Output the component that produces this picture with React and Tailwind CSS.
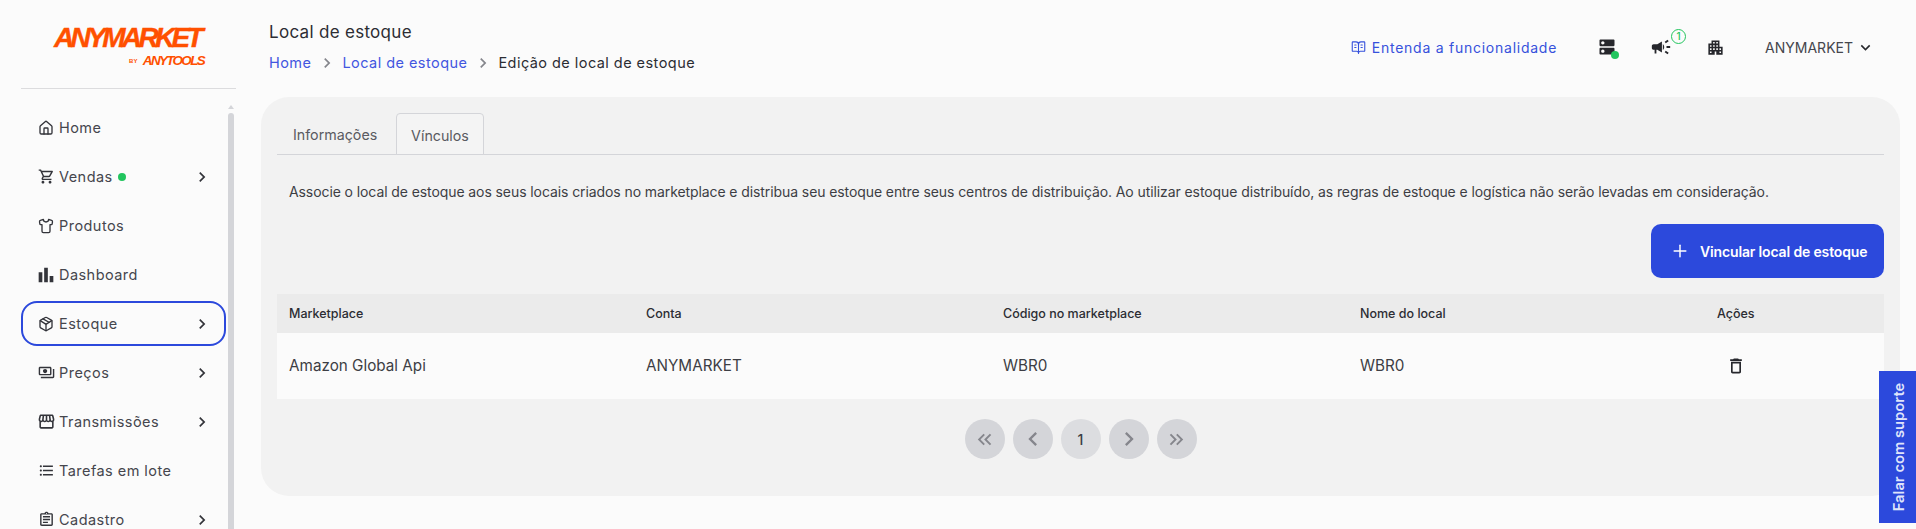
import React from 'react'
import { Plus, BookOpenText } from 'lucide-react'
import {
  MdOutlineShoppingCart, MdBarChart, MdOutlinePayments, MdOutlineStorefront, MdFormatListBulleted,
  MdOutlineAssignment, MdChevronRight, MdDns, MdCampaign, MdApartment,
  MdKeyboardArrowDown, MdOutlineDelete, MdKeyboardDoubleArrowLeft, MdKeyboardDoubleArrowRight,
  MdKeyboardArrowLeft, MdKeyboardArrowRight,
} from 'react-icons/md'
import { LuHouse, LuShirt, LuPackage } from 'react-icons/lu'

const menu = [
  { label: 'Home', icon: LuHouse, size: 16 },
  { label: 'Vendas', icon: MdOutlineShoppingCart, arrow: true, dot: true },
  { label: 'Produtos', icon: LuShirt, size: 16 },
  { label: 'Dashboard', icon: MdBarChart, size: 22 },
  { label: 'Estoque', icon: LuPackage, arrow: true, active: true, size: 16 },
  { label: 'Preços', icon: MdOutlinePayments, arrow: true },
  { label: 'Transmissões', icon: MdOutlineStorefront, arrow: true, size: 19 },
  { label: 'Tarefas em lote', icon: MdFormatListBulleted },
  { label: 'Cadastro', icon: MdOutlineAssignment, arrow: true },
]

const columns = ['Marketplace', 'Conta', 'Código no marketplace', 'Nome do local']
const row = ['Amazon Global Api', 'ANYMARKET', 'WBR0', 'WBR0']

function MenuItem({ item }) {
  const Icon = item.icon
  return (
    <div className={`h-[45px] shrink-0 flex items-center rounded-[16px] ${item.active ? 'border-2 border-[#2c49dc] px-[15px]' : 'px-[17px]'}`}>
      <span className="w-[16px] flex justify-center shrink-0">
        <Icon size={item.size || 17} className="shrink-0 text-[#33343a]" />
      </span>
      <span className="ml-[5px] text-[14.5px] tracking-[0.45px] text-[#45464d]">{item.label}</span>
      {item.dot && <span className="ml-[5px] w-[8px] h-[8px] rounded-full bg-[#22c55e]" />}
      {item.arrow && <MdChevronRight size={20} className="ml-auto mr-[-3px] text-[#33343a]" />}
    </div>
  )
}

function PageButton({ children }) {
  return (
    <button className="w-[40px] h-[40px] rounded-full bg-[#d4d5d9] flex items-center justify-center text-[#85868c]">
      {children}
    </button>
  )
}

export default function App() {
  return (
    <div className="h-screen overflow-hidden bg-[#fbfbfb] flex font-['Inter',sans-serif] text-[#2c2d33]">
      {/* Sidebar */}
      <aside className="w-[261px] shrink-0 flex flex-col">
        <div className="mx-[21px] w-[215px] h-[89px] border-b border-[#dcdcde] pl-[33px] pt-[25px] shrink-0 font-['Liberation_Sans',sans-serif] italic font-bold text-[#ff5000]">
          <div className="text-[28px] leading-[25px] tracking-[-3.65px] [-webkit-text-stroke:0.4px_#ff5000]">ANYMARKET</div>
          <div className="flex items-center justify-end w-[150px] mt-[4px] text-[13.5px] leading-[14px] tracking-[-1.7px]">
            <span className="text-[6px] not-italic mr-[5px] tracking-[0.3px]">BY</span>ANYTOOLS
          </div>
        </div>
        <div className="flex flex-1 min-h-0 pl-[21px] pt-[16px]">
          <nav className="w-[205px] flex flex-col gap-[4px]">
            {menu.map(item => <MenuItem key={item.label} item={item} />)}
          </nav>
          <div className="ml-[2px] w-[6px] flex flex-col items-center">
            <span className="w-0 h-0 border-x-[3px] border-x-transparent border-b-[4px] border-b-[#d4d5d9]" />
            <span className="mt-[4px] w-[6px] flex-1 bg-[#d4d5d9] rounded-t-[3px]" />
          </div>
        </div>
      </aside>

      {/* Main */}
      <main className="flex-1 min-w-0 pr-[16px]">
        <header className="h-[97px] flex pl-[8px] pr-[25px]">
          <div className="pt-[22px]">
            <div className="text-[17px] leading-[21px] tracking-[0.3px] text-[#2c2d33]">Local de estoque</div>
            <div className="mt-[10px] flex items-center text-[14.5px] leading-[20px] tracking-[0.45px]">
              <span className="text-[#4256e0]">Home</span>
              <MdChevronRight size={20} className="mx-[5.5px] text-[#85868c]" />
              <span className="text-[#4256e0]">Local de estoque</span>
              <MdChevronRight size={20} className="mx-[5.5px] text-[#85868c]" />
              <span>Edição de local de estoque</span>
            </div>
          </div>
          <div className="ml-auto flex items-center h-[94px] text-[14px]">
            <BookOpenText size={15} strokeWidth={1.75} className="text-[#3651dc]" />
            <span className="ml-[6px] tracking-[0.75px] text-[#3651dc]">Entenda a funcionalidade</span>
            <span className="relative ml-[40px] flex">
              <MdDns size={20} className="text-[#26272c]" />
              <span className="absolute right-[-2px] bottom-[-2px] w-[8px] h-[8px] rounded-full bg-[#22c55e]" />
            </span>
            <span className="relative ml-[33px] flex">
              <MdCampaign size={22} className="text-[#26272c]" />
              <span className="absolute left-[21px] top-[-7px] w-[15px] h-[15px] rounded-full border border-[#22c55e] text-[#22c55e] text-[10px] leading-[13px] text-center font-medium">1</span>
            </span>
            <MdApartment size={19} className="ml-[34px] text-[#26272c]" />
            <span className="ml-[40px] text-[14px] text-[#45464d]">ANYMARKET</span>
            <MdKeyboardArrowDown size={19} className="ml-[3px] text-[#26272c]" />
          </div>
        </header>

        <section className="h-[399px] bg-[#f2f2f2] rounded-[28px] px-[16px] pt-[16px]">
          {/* Tabs */}
          <div className="h-[42px] flex border-b border-[#d4d5d9] text-[14.25px] text-[#5a5b61]">
            <div className="w-[119px] pl-[16px] pt-[11px]">Informações</div>
            <div className="w-[88px] h-[42px] pt-[11px] text-center border border-[#d4d5d9] rounded-t-[4px] bg-[#f4f4f4]">Vínculos</div>
          </div>

          <p className="mt-[27px] ml-[12px] text-[14px] leading-[20px] tracking-[-0.09px] text-[#3d3e44] whitespace-nowrap">
            Associe o local de estoque aos seus locais criados no marketplace e distribua seu estoque entre seus centros de distribuição. Ao utilizar estoque distribuído, as regras de estoque e logística não serão levadas em consideração.
          </p>

          <div className="mt-[22px] flex justify-end">
            <button className="w-[233px] h-[54px] rounded-[10px] bg-[#2c49dc] text-white flex items-center pl-[19px] text-[14px] font-semibold tracking-[-0.15px]">
              <Plus size={20} strokeWidth={1.75} />
              <span className="ml-[10px]">Vincular local de estoque</span>
            </button>
          </div>

          {/* Table */}
          <div className="mt-[16px]">
            <div className="h-[39px] pt-[1px] bg-[#ebebeb] grid grid-cols-[357px_357px_357px_357px_1fr] items-center pl-[12px] text-[12.5px] font-medium text-[#2c2d33]">
              {columns.map(c => <div key={c}>{c}</div>)}
              <div>Ações</div>
            </div>
            <div className="h-[66px] bg-[#fbfbfb] grid grid-cols-[357px_357px_357px_357px_1fr] items-center pl-[12px] text-[15.25px] text-[#3d3e44]">
              {row.map((c, i) => <div key={i}>{c}</div>)}
              <div><MdOutlineDelete size={20} className="ml-[9px] text-[#26272c]" /></div>
            </div>
          </div>

          {/* Pagination */}
          <div className="mt-[20px] flex justify-center gap-[8px]">
            <PageButton><MdKeyboardDoubleArrowLeft size={23} /></PageButton>
            <PageButton><MdKeyboardArrowLeft size={28} /></PageButton>
            <button className="w-[40px] h-[40px] rounded-full bg-[#dcdde0] text-[14px] font-medium text-[#3d3e44]">1</button>
            <PageButton><MdKeyboardArrowRight size={28} /></PageButton>
            <PageButton><MdKeyboardDoubleArrowRight size={23} /></PageButton>
          </div>
        </section>
      </main>

      {/* Support tab */}
      <div className="fixed right-0 top-[371px] w-[37px] h-[152px] pl-[4px] bg-[#2c49dc] flex items-center justify-center">
        <span className="-rotate-90 whitespace-nowrap text-[14.75px] font-semibold text-[#dfe4fb]">Falar com suporte</span>
      </div>
    </div>
  )
}
